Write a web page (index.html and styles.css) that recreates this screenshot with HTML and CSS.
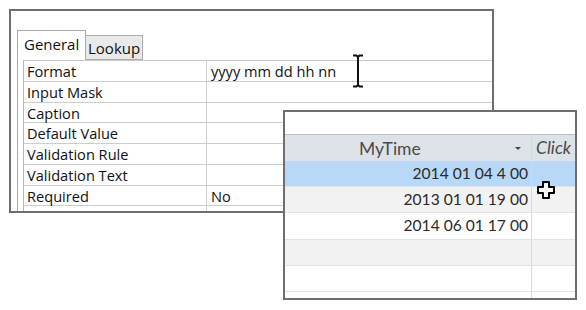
FILE: index.html
```html
<!DOCTYPE html>
<html lang="en">
<head>
    <meta charset="UTF-8">
    <title>Field Properties - MyTime</title>
    <link rel="stylesheet" href="styles.css">
</head>
<body>
    <div class="desk">
        <!-- Field properties panel -->
        <div class="props">
            <div class="tabs">
                <div class="tab active">General</div>
                <div class="tab">Lookup</div>
            </div>
            <div class="page">
                <div class="grid">
                    <div class="prow"><div class="pname">Format</div><div class="pval">yyyy mm dd hh nn</div></div>
                    <div class="prow"><div class="pname">Input Mask</div><div class="pval"></div></div>
                    <div class="prow"><div class="pname">Caption</div><div class="pval"></div></div>
                    <div class="prow"><div class="pname">Default Value</div><div class="pval"></div></div>
                    <div class="prow"><div class="pname">Validation Rule</div><div class="pval"></div></div>
                    <div class="prow"><div class="pname">Validation Text</div><div class="pval"></div></div>
                    <div class="prow"><div class="pname">Required</div><div class="pval">No</div></div>
                    <div class="prow"><div class="pname"></div><div class="pval"></div></div>
                </div>
            </div>
        </div>

        <!-- text cursor over the format box -->
        <svg class="ibeam" width="12" height="34" viewBox="0 0 12 34">
            <path d="M1 1.5h3.5l1.5 1.5l1.5-1.5h3.5M6 3v28M1 32.5h3.5l1.5-1.5l1.5 1.5h3.5" fill="none" stroke="#111" stroke-width="2"/>
        </svg>

        <!-- datasheet window -->
        <div class="sheet">
            <div class="sheet-top"></div>
            <div class="srow head">
                <div class="cell c1"><span class="htext">MyTime</span><span class="arrow"></span></div>
                <div class="cell c2"><i>Click</i></div>
            </div>
            <div class="srow sel"><div class="cell c1">2014 01 04 4 00</div><div class="cell c2"></div></div>
            <div class="srow alt"><div class="cell c1">2013 01 01 19 00</div><div class="cell c2"></div></div>
            <div class="srow"><div class="cell c1">2014 06 01 17 00</div><div class="cell c2"></div></div>
            <div class="srow alt"><div class="cell c1"></div><div class="cell c2"></div></div>
            <div class="srow"><div class="cell c1"></div><div class="cell c2"></div></div>
            <div class="srow"><div class="cell c1"></div><div class="cell c2"></div></div>
        </div>

        <!-- select cursor -->
        <svg class="plus" width="18" height="18" viewBox="0 0 18 18">
            <path d="M6 1h6v5h5v6h-5v5h-6v-5h-5v-6h5z" fill="#fff" stroke="#000" stroke-width="2" stroke-linejoin="round"/>
        </svg>
    </div>
</body>
</html>
```

FILE: styles.css
```css
/* Base */
body {
    margin: 0;
    background-color: #ffffff;
    font-family: "Open Sans", "Noto Sans", sans-serif;
}

.desk {
    position: relative;
    width: 586px;
    height: 310px;
    overflow: hidden;
}

/* Properties panel */
.props {
    box-sizing: border-box;
    width: 485px;
    height: 204px;
    margin: 9px 0 0 9px;
    padding: 19px 0 0 6px;
    border: 2px solid #6e6e6e;
    overflow: hidden;
    background-color: #ffffff;
}

.tabs {
    display: flex;
    align-items: flex-end;
    height: 30px;
}

.tab {
    box-sizing: border-box;
    height: 25px;
    padding: 0 2px;
    border: 1px solid #acacac;
    border-left: none;
    background-color: #e9e9e9;
    font-size: 15px;
    line-height: 24px;
    color: #111;
}

.tab.active {
    width: 69px;
    height: 30px;
    padding: 0 6px;
    border-left: 1px solid #acacac;
    border-bottom: none;
    background-color: #ffffff;
    line-height: 27px;
}

.page {
    border-left: 1px solid #acacac;
    padding-left: 5px;
    height: 200px;
}

.grid {
    border-top: 1px solid #c9c9c9;
    border-left: 1px solid #b8b8b8;
}

.prow {
    display: flex;
    box-sizing: border-box;
    height: 20.75px;
    border-bottom: 1px solid #cdcdcd;
    font-size: 14.6px;
    line-height: 20px;
    color: #111;
}

.pname {
    width: 183px;
    padding-left: 3px;
    box-sizing: border-box;
    border-right: 1px solid #cdcdcd;
}

.pval {
    flex: 1;
    padding-left: 4px;
}

.ibeam {
    position: absolute;
    left: 352px;
    top: 54px;
}

/* Datasheet */
.sheet {
    position: absolute;
    left: 283px;
    top: 110px;
    box-sizing: border-box;
    width: 294px;
    height: 190px;
    border: 2px solid #6e6e6e;
    background-color: #ffffff;
    overflow: hidden;
    font-family: Lato, "Open Sans", sans-serif;
}

.sheet-top {
    height: 22px;
}

.srow {
    display: flex;
    box-sizing: border-box;
    height: 26.2px;
    border-bottom: 1px solid #e3e3e3;
    font-size: 15.6px;
    line-height: 25px;
    color: #2a2a2a;
}

.srow.head {
    height: 27px;
    border-top: 1px solid #b9bec5;
    border-bottom: none;
    background-color: #dde2e8;
    color: #4a4a4a;
    font-size: 17.5px;
}

.srow.sel {
    background-color: #b7d9f7;
}

.srow.alt {
    background-color: #f2f2f2;
}

.cell {
    box-sizing: border-box;
}

.c1 {
    width: 247px;
    padding-right: 3px;
    text-align: right;
    border-right: 1px solid #d9d9d9;
}

.c2 {
    flex: 1;
    padding-left: 4px;
}

.head .c1 {
    display: flex;
    align-items: center;
    padding-left: 74px;
    padding-right: 10px;
    text-align: left;
}

.arrow {
    margin-left: auto;
    width: 0;
    height: 0;
    border-left: 3px solid transparent;
    border-right: 3px solid transparent;
    border-top: 3px solid #444;
}

.plus {
    position: absolute;
    left: 537px;
    top: 181px;
}
```
